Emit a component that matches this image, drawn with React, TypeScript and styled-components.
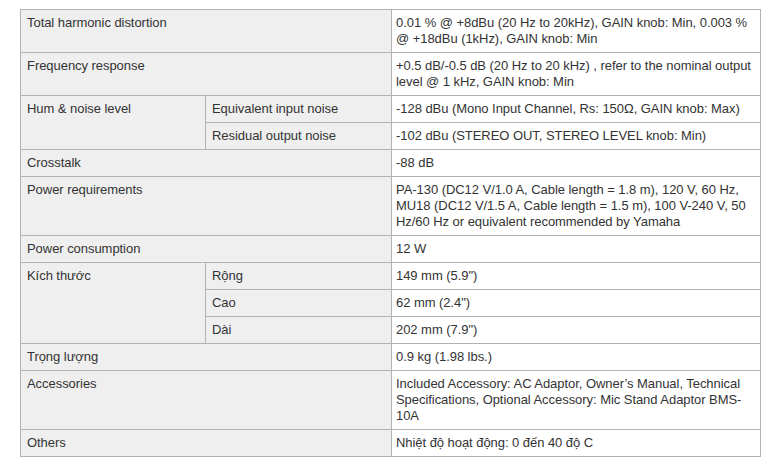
import React from "react";
import styled, { createGlobalStyle } from "styled-components";

const GlobalStyle = createGlobalStyle`
  html, body { margin: 0; padding: 0; background: #ffffff; }
  body { font-family: "Liberation Sans", Arial, sans-serif; }
`;

const Page = styled.div`
  padding: 9px 20px 0 20px;
`;

const SpecTable = styled.table`
  width: 740px;
  border-collapse: collapse;
  table-layout: fixed;
  border: 1px solid #a6a6a6;
  font-family: "Liberation Sans", Arial, sans-serif;
  font-size: 13px;
  line-height: 16px;
  letter-spacing: -0.05px;
  color: #333333;
`;

const Cell = styled.td<{ $label?: boolean }>`
  border: 1px solid #b3b3b3;
  padding: ${(p) => (p.$label ? "5px 5px 5px 6px" : "5px 3px 5px 4px")};
  vertical-align: top;
  background: ${(p) => (p.$label ? "#efefef" : "#ffffff")};
  text-align: left;
`;

type Row =
  | { kind: "single"; label: string; value: string }
  | { kind: "group"; label: string; items: { sub: string; value: string }[] };

const rows: Row[] = [
  {
    kind: "single",
    label: "Total harmonic distortion",
    value:
      "0.01 % @ +8dBu (20 Hz to 20kHz), GAIN knob: Min, 0.003 % @ +18dBu (1kHz), GAIN knob: Min",
  },
  {
    kind: "single",
    label: "Frequency response",
    value:
      "+0.5 dB/-0.5 dB (20 Hz to 20 kHz) , refer to the nominal output level @ 1 kHz, GAIN knob: Min",
  },
  {
    kind: "group",
    label: "Hum & noise level",
    items: [
      {
        sub: "Equivalent input noise",
        value: "-128 dBu (Mono Input Channel, Rs: 150Ω, GAIN knob: Max)",
      },
      {
        sub: "Residual output noise",
        value: "-102 dBu (STEREO OUT, STEREO LEVEL knob: Min)",
      },
    ],
  },
  { kind: "single", label: "Crosstalk", value: "-88 dB" },
  {
    kind: "single",
    label: "Power requirements",
    value:
      "PA-130 (DC12 V/1.0 A, Cable length = 1.8 m), 120 V, 60 Hz, MU18 (DC12 V/1.5 A, Cable length = 1.5 m), 100 V-240 V, 50 Hz/60 Hz or equivalent recommended by Yamaha",
  },
  { kind: "single", label: "Power consumption", value: "12 W" },
  {
    kind: "group",
    label: "Kích thước",
    items: [
      { sub: "Rộng", value: "149 mm (5.9\")" },
      { sub: "Cao", value: "62 mm (2.4\")" },
      { sub: "Dài", value: "202 mm (7.9\")" },
    ],
  },
  { kind: "single", label: "Trọng lượng", value: "0.9 kg (1.98 lbs.)" },
  {
    kind: "single",
    label: "Accessories",
    value:
      "Included Accessory: AC Adaptor, Owner’s Manual, Technical Specifications, Optional Accessory: Mic Stand Adaptor BMS-10A",
  },
  { kind: "single", label: "Others", value: "Nhiệt độ hoạt động: 0 đến 40 độ C" },
];

export default function App() {
  return (
    <Page>
      <GlobalStyle />
      <SpecTable>
        <colgroup>
          <col style={{ width: 185 }} />
          <col style={{ width: 186 }} />
          <col style={{ width: 369 }} />
        </colgroup>
        <tbody>
          {rows.map((r) =>
            r.kind === "single" ? (
              <tr key={r.label}>
                <Cell $label colSpan={2}>
                  {r.label}
                </Cell>
                <Cell>{r.value}</Cell>
              </tr>
            ) : (
              r.items.map((it, i) => (
                <tr key={r.label + it.sub}>
                  {i === 0 && (
                    <Cell $label rowSpan={r.items.length}>
                      {r.label}
                    </Cell>
                  )}
                  <Cell $label>{it.sub}</Cell>
                  <Cell>{it.value}</Cell>
                </tr>
              ))
            )
          )}
        </tbody>
      </SpecTable>
    </Page>
  );
}
